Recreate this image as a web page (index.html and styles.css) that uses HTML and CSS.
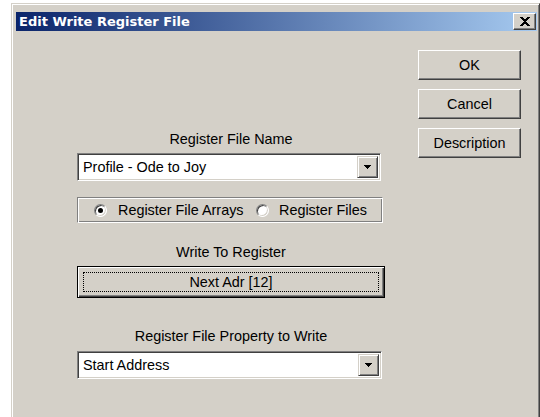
FILE: index.html
```html
<!DOCTYPE html>
<html>
<head>
<meta charset="utf-8">
<title>Edit Write Register File</title>
<link rel="stylesheet" href="styles.css">
</head>
<body>
<div class="window">
  <div class="titlebar">
    <span class="title">Edit Write Register File</span>
    <div class="close">
      <svg width="10" height="9" viewBox="0 0 10 9"><path d="M0 0h3v1H0zM7 0h3v1H7zM1 1h3v1H1zM6 1h3v1H6zM2 2h6v1H2zM3 3h4v1H3zM4 4h2v1H4zM3 5h4v1H3zM2 6h6v1H2zM1 7h3v1H1zM6 7h3v1H6zM0 8h3v1H0zM7 8h3v1H7z" fill="#000"/></svg>
    </div>
  </div>
  <div class="client">
    <div class="form">
      <div class="label">Register File Name</div>
      <div class="combo combo-name">
        <div class="combo-text">Profile - Ode to Joy</div>
        <div class="combo-btn"><svg width="7" height="4" viewBox="0 0 7 4"><path d="M0 0h7v1H0zM1 1h5v1H1zM2 2h3v1H2zM3 3h1v1H3z" fill="#000"/></svg></div>
      </div>
      <div class="group">
        <div class="radio radio-first"><span class="dot checked"></span>Register File Arrays</div>
        <div class="radio"><span class="dot"></span>Register Files</div>
      </div>
      <div class="label label-write">Write To Register</div>
      <div class="btn-default"><div class="focus">Next Adr [12]</div></div>
      <div class="label label-prop">Register File Property to Write</div>
      <div class="combo combo-prop">
        <div class="combo-text">Start Address</div>
        <div class="combo-btn"><svg width="7" height="4" viewBox="0 0 7 4"><path d="M0 0h7v1H0zM1 1h5v1H1zM2 2h3v1H2zM3 3h1v1H3z" fill="#000"/></svg></div>
      </div>
    </div>
    <div class="actions">
      <div class="btn">OK</div>
      <div class="btn">Cancel</div>
      <div class="btn">Description</div>
    </div>
  </div>
</div>
</body>
</html>
```
FILE: styles.css
```css
html, body {
  margin: 0;
  height: 417px;
  overflow: hidden;
  background: #fff;
}

.window {
  margin: 3px 0 0 11px;
  width: 529px;
  height: 414px;
  box-sizing: border-box;
  background: #d4d0c8;
  border: 1px solid;
  border-bottom: 0;
  border-color: #d4d0c8 #404040 #404040 #d4d0c8;
  box-shadow: inset 1px 1px #fff, inset -1px 0 #808080;
  padding: 8px 2px 0 4px;
  font-family: "Liberation Sans", Arial, sans-serif;
  font-size: 14.4px;
  color: #000;
}

/* caption */
.titlebar {
  height: 19px;
  display: flex;
  align-items: center;
  padding-left: 3px;
  background: linear-gradient(to right, #0a246a, #a6caf0);
}

.title {
  font-family: "DejaVu Sans", Verdana, sans-serif;
  font-weight: bold;
  font-size: 13px;
  color: #fff;
  line-height: 19px;
}

.close {
  margin-left: auto;
  margin-right: 1px;
  width: 23px;
  height: 17px;
  box-sizing: border-box;
  background: #d4d0c8;
  border: 1px solid;
  border-color: #fff #404040 #404040 #fff;
  box-shadow: inset -1px -1px #808080;
  display: flex;
  align-items: center;
  justify-content: center;
}

/* dialog body */
.client {
  display: flex;
}

.form {
  margin-left: 61px;
  width: 308px;
  padding-top: 100px;
}

.label {
  line-height: 17px;
  text-align: center;
  white-space: nowrap;
}

.label-write { margin-top: 21px; }
.label-prop { margin-top: 30px; }

.combo {
  height: 28px;
  box-sizing: border-box;
  display: flex;
  padding: 2px;
  background: #fff;
  border: 1px solid;
  border-color: #808080 #fff #fff #808080;
  box-shadow: inset 1px 1px #404040, inset -1px -1px #d4d0c8;
}

.combo-name { width: 304px; margin-top: 5px; }
.combo-prop { width: 305px; margin-top: 6px; }

.combo-text {
  flex: 1;
  padding-left: 3px;
  line-height: 23px;
  white-space: nowrap;
}

.combo-btn {
  width: 21px;
  box-sizing: border-box;
  background: #d4d0c8;
  border: 1px solid;
  border-color: #d4d0c8 #404040 #404040 #d4d0c8;
  box-shadow: inset 1px 1px #fff, inset -1px -1px #808080;
  display: flex;
  align-items: center;
  justify-content: center;
}

/* radio group */
.group {
  margin-top: 16px;
  width: 306px;
  height: 26px;
  box-sizing: border-box;
  border: 1px solid;
  border-color: #808080 #fff #fff #808080;
  box-shadow: inset 1px 1px #fff, inset -1px -1px #808080;
  display: flex;
  align-items: center;
  padding-left: 16px;
}

.radio {
  display: flex;
  align-items: center;
  gap: 10px;
  white-space: nowrap;
}

.radio-first {
  width: 162px;
  gap: 11px;
}

.dot {
  width: 13px;
  height: 13px;
  box-sizing: border-box;
  border-radius: 50%;
  background: #fff;
  border: 1px solid;
  border-color: #808080 #fff #fff #808080;
  box-shadow: inset 1px 1px #404040, inset -1px -1px #d4d0c8;
  display: flex;
  align-items: center;
  justify-content: center;
}

.dot.checked::after {
  content: "";
  width: 5px;
  height: 5px;
  border-radius: 50%;
  background: #000;
}

/* default push button with focus rectangle */
.btn-default {
  margin-top: 5px;
  width: 308px;
  height: 32px;
  box-sizing: border-box;
  background: #d4d0c8;
  border: 1px solid #000;
  box-shadow: inset 1px 1px #fff, inset -1px -1px #404040, inset -2px -2px #808080;
  padding: 5px;
}

.focus {
  height: 100%;
  box-sizing: border-box;
  border: 1px dotted #000;
  display: flex;
  align-items: center;
  justify-content: center;
}

/* command buttons */
.actions {
  margin-left: 33px;
  width: 103px;
  padding-top: 19px;
  display: flex;
  flex-direction: column;
  gap: 9px;
}

.btn {
  height: 30px;
  box-sizing: border-box;
  background: #d4d0c8;
  border: 1px solid;
  border-color: #fff #404040 #404040 #fff;
  box-shadow: inset -1px -1px #808080;
  display: flex;
  align-items: center;
  justify-content: center;
}
```
